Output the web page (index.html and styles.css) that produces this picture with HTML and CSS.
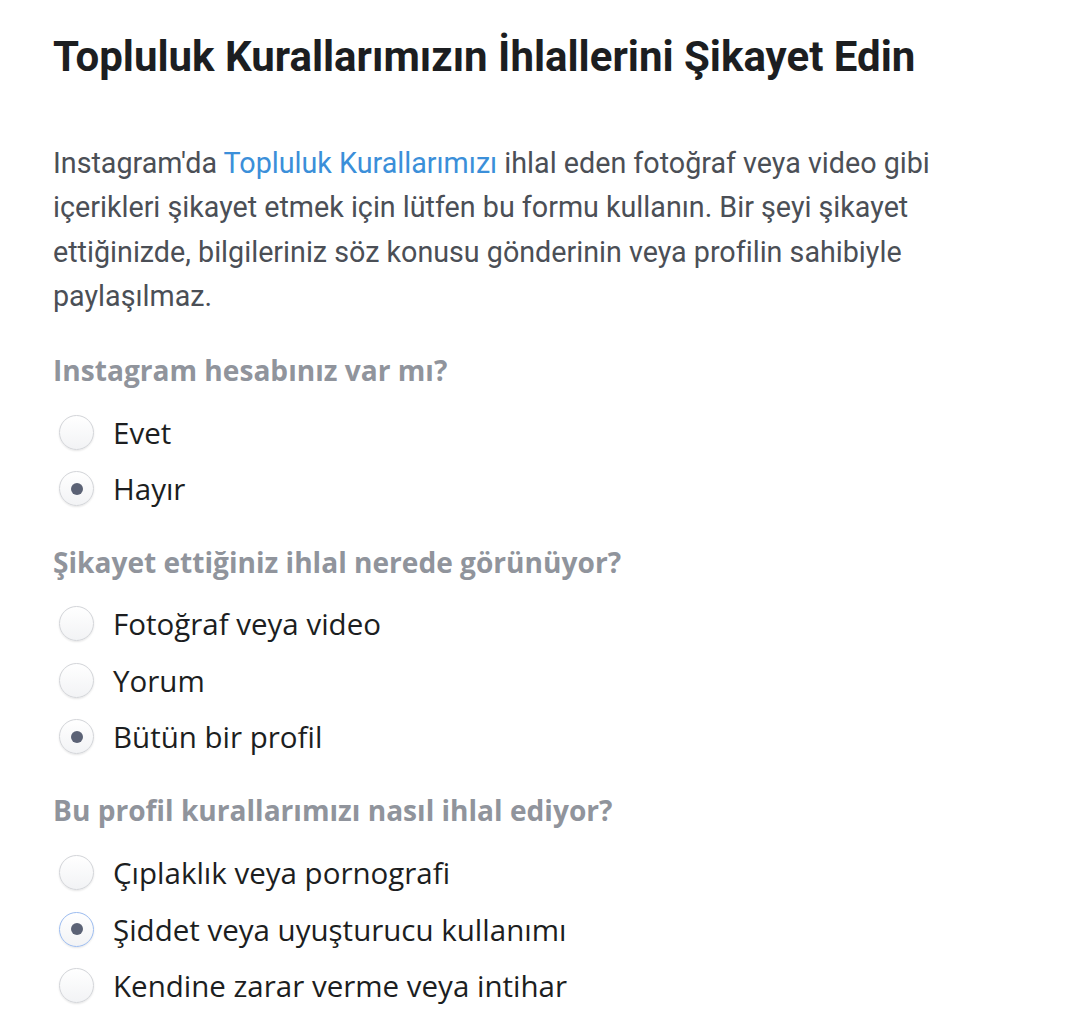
FILE: index.html
```html
<!DOCTYPE html>
<html lang="tr">
<head>
<meta charset="utf-8">
<link rel="stylesheet" href="styles.css">
</head>
<body>
<main class="page">
  <h1 class="title">Topluluk Kurallarımızın İhlallerini Şikayet Edin</h1>
  <p class="intro">Instagram'da <a class="link" href="#">Topluluk Kurallarımızı</a> ihlal eden fotoğraf veya video gibi içerikleri şikayet etmek için lütfen bu formu kullanın. Bir şeyi şikayet ettiğinizde, bilgileriniz söz konusu gönderinin veya profilin sahibiyle paylaşılmaz.</p>

  <section class="group">
    <h2 class="question">Instagram hesabınız var mı?</h2>
    <div class="options">
      <div class="option"><span class="radio"></span><span class="label">Evet</span></div>
      <div class="option"><span class="radio checked"></span><span class="label">Hayır</span></div>
    </div>
  </section>

  <section class="group">
    <h2 class="question">Şikayet ettiğiniz ihlal nerede görünüyor?</h2>
    <div class="options">
      <div class="option"><span class="radio"></span><span class="label">Fotoğraf veya video</span></div>
      <div class="option"><span class="radio"></span><span class="label">Yorum</span></div>
      <div class="option"><span class="radio checked"></span><span class="label">Bütün bir profil</span></div>
    </div>
  </section>

  <section class="group">
    <h2 class="question">Bu profil kurallarımızı nasıl ihlal ediyor?</h2>
    <div class="options">
      <div class="option"><span class="radio"></span><span class="label">Çıplaklık veya pornografi</span></div>
      <div class="option"><span class="radio checked focus"></span><span class="label">Şiddet veya uyuşturucu kullanımı</span></div>
      <div class="option"><span class="radio"></span><span class="label">Kendine zarar verme veya intihar</span></div>
    </div>
  </section>
</main>
</body>
</html>
```

FILE: styles.css
```css
html, body {
  margin: 0;
  padding: 0;
  background: #ffffff;
}

.page {
  padding: 30px 0 0 53px;
  display: flex;
  flex-direction: column;
}

.title {
  margin: 0;
  font-family: Roboto, "Liberation Sans", sans-serif;
  font-weight: 700;
  font-size: 42px;
  line-height: 54px;
  color: #1c1e21;
}

.intro {
  margin: 57px 0 0 0;
  width: 960px;
  font-family: Roboto, "Liberation Sans", sans-serif;
  font-size: 28.7px;
  line-height: 44.3px;
  color: #4b4f56;
}

.link {
  color: #3b8fd9;
  text-decoration: none;
}

.group {
  display: flex;
  flex-direction: column;
}

.question {
  margin: 32px 0 0 0;
  font-family: "Open Sans", "Liberation Sans", sans-serif;
  font-weight: 700;
  font-size: 28.1px;
  line-height: 40px;
  color: #90949c;
}

.options {
  display: flex;
  flex-direction: column;
  gap: 16.5px;
  margin-top: 22px;
}

.group + .group .question {
  margin-top: 33px;
}

.group + .group + .group .options {
  margin-top: 23px;
}

.option {
  display: flex;
  align-items: center;
  height: 40px;
}

.radio {
  box-sizing: border-box;
  width: 35px;
  height: 35px;
  margin-left: 6px;
  margin-right: 19px;
  border-radius: 50%;
  border: 1.5px solid #d3d5d9;
  background: linear-gradient(#ffffff, #f2f3f5);
  box-shadow: 0 1px 2px rgba(0, 0, 0, 0.1);
  display: flex;
  align-items: center;
  justify-content: center;
}

.radio.checked::after {
  content: "";
  width: 12px;
  height: 12px;
  border-radius: 50%;
  background: #5b6275;
}

.radio.focus {
  border-color: #9cbcf0;
}

.label {
  font-family: "Open Sans", "Liberation Sans", sans-serif;
  font-size: 29.5px;
  color: #1c1e21;
}
```
